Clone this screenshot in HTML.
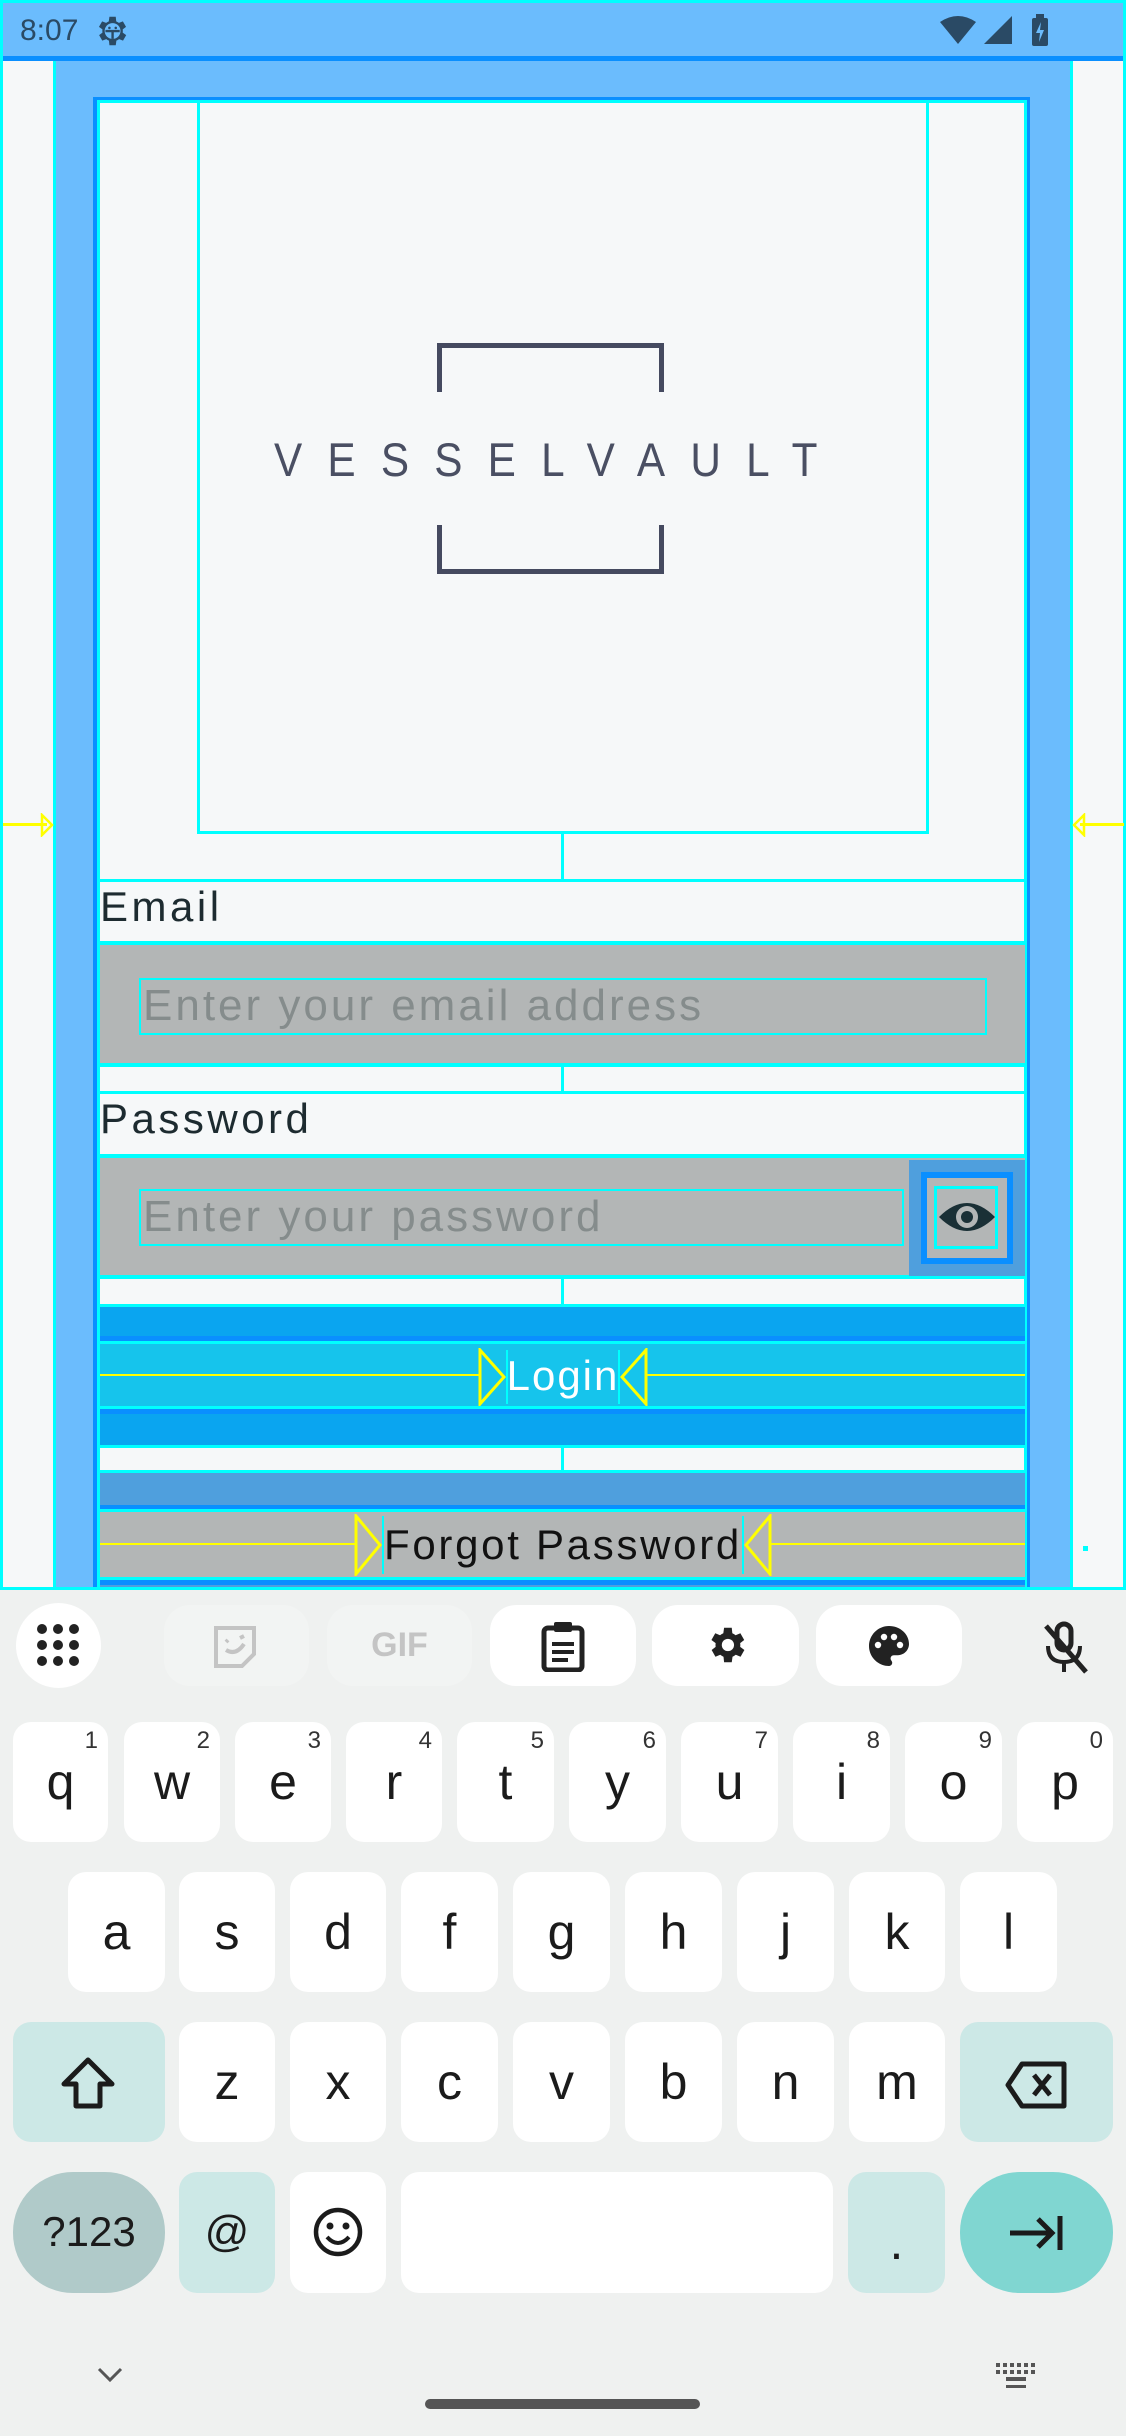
<!DOCTYPE html>
<html><head><meta charset="utf-8"><style>
*{margin:0;padding:0;box-sizing:border-box}
body{width:1126px;height:2436px;position:relative;overflow:hidden;background:#eff1f0;font-family:"Liberation Sans",sans-serif}
.a{position:absolute}
.key{position:absolute;background:#fff;border-radius:18px;color:#1b1b1b;font-size:50px;text-align:center;line-height:120px}
.key sup{position:absolute;right:10px;top:4px;font-size:24px;line-height:30px;color:#333}
.tb{position:absolute;top:1605px;height:81px;border-radius:26px;background:#fff}
.lbl{font-size:42px;letter-spacing:3.5px;color:#1d2b30}
.ph{font-size:44px;letter-spacing:3px;color:#858c8c;line-height:52px;padding-left:2px;white-space:nowrap;overflow:hidden}
</style></head><body>
<div class="a" style="left:0;top:0;width:1126px;height:1590px;background:#f6f8f9;border:3px solid #00ffff"></div>
<div class="a" style="left:0;top:0;width:1126px;height:61px;background:#6bbcfd;border:3px solid #00ffff;border-bottom:none"></div>
<div class="a" style="left:3px;top:56px;width:1120px;height:5px;background:#0a8fff"></div>
<div class="a" style="left:20px;top:14px;font-size:30px;color:#2a4a65">8:07</div>
<svg class="a" style="left:92px;top:12px" width="38" height="38" viewBox="0 0 24 24"><path fill="#2a4a65" d="M19.4 13a7.5 7.5 0 0 0 0-2l2.1-1.6-2-3.5-2.5 1a7 7 0 0 0-1.7-1L15 3h-4l-.4 2.9a7 7 0 0 0-1.7 1l-2.5-1-2 3.5L6.6 11a7.5 7.5 0 0 0 0 2l-2.1 1.6 2 3.5 2.5-1a7 7 0 0 0 1.7 1L11 21h4l.4-2.9a7 7 0 0 0 1.7-1l2.5 1 2-3.5z"/><circle cx="13" cy="12" r="5" fill="#6bbcfd"/><path d="M8.5 12h9M13 12v5" stroke="#2a4a65" stroke-width="1.5"/><circle cx="11" cy="10" r=".8" fill="#2a4a65"/><circle cx="15" cy="10" r=".8" fill="#2a4a65"/></svg>
<svg class="a" style="left:940px;top:14px" width="120" height="34" viewBox="0 0 120 34"><path d="M0 8 Q18 -4 36 8 L18 30Z" fill="#2a4a65"/><path d="M44 30 L72 2 L72 30Z" fill="#2a4a65"/><rect x="92" y="4" width="16" height="28" rx="2" fill="#2a4a65"/><rect x="96" y="0" width="8" height="5" fill="#2a4a65"/><path d="M101 8 L96 19 L100 19 L99 28 L104 16 L100 16Z" fill="#6bbcfd"/></svg>
<div class="a" style="left:53px;top:61px;width:1020px;height:1529px;background:#6bbcfd;border-left:3px solid #00ffff;border-right:3px solid #00ffff"></div>
<div class="a" style="left:93px;top:97px;width:937px;height:1493px;background:#0a8fff"></div>
<div class="a" style="left:97px;top:100px;width:930px;height:1490px;background:#f6f8f9;border:3px solid #00ffff"></div>
<div class="a" style="left:3px;top:823px;width:44px;height:3px;background:#ffff00"></div>
<svg class="a" style="left:40px;top:813px" width="14" height="24"><path d="M2 2 L12 12 L2 22Z" fill="none" stroke="#ffff00" stroke-width="2.5"/></svg>
<div class="a" style="left:1080px;top:823px;width:44px;height:3px;background:#ffff00"></div>
<svg class="a" style="left:1072px;top:813px" width="14" height="24"><path d="M12 2 L2 12 L12 22Z" fill="none" stroke="#ffff00" stroke-width="2.5"/></svg>
<div class="a" style="left:197px;top:100px;width:732px;height:734px;border:3px solid #00ffff;border-top:none"></div>
<div class="a" style="left:437px;top:343px;width:227px;height:49px;border:5px solid #454a60;border-bottom:none"></div>
<div class="a" style="left:437px;top:525px;width:227px;height:49px;border:5px solid #454a60;border-top:none"></div>
<div class="a" style="left:274px;top:432px;font-size:47px;color:#4a4f63;letter-spacing:28px;white-space:nowrap;transform:scaleX(.9);transform-origin:left">VESSELVAULT</div>
<div class="a" style="left:561px;top:832px;width:3px;height:50px;background:#00ffff"></div>
<div class="a" style="left:100px;top:879px;width:925px;height:3px;background:#00ffff"></div>
<div class="a lbl" style="left:100px;top:883px">Email</div>
<div class="a" style="left:100px;top:941px;width:925px;height:126px;background:#b3b6b6;border-top:4px solid #00ffff;border-bottom:4px solid #00ffff"></div>
<div class="a ph" style="left:139px;top:978px;width:848px;height:57px;border:2px solid #00ffff">Enter your email address</div>
<div class="a" style="left:561px;top:1067px;width:3px;height:26px;background:#00ffff"></div>
<div class="a" style="left:100px;top:1091px;width:925px;height:3px;background:#00ffff"></div>
<div class="a lbl" style="left:100px;top:1095px">Password</div>
<div class="a" style="left:100px;top:1154px;width:925px;height:125px;background:#b3b6b6;border-top:4px solid #00ffff;border-bottom:4px solid #00ffff"></div>
<div class="a ph" style="left:139px;top:1189px;width:765px;height:57px;border:2px solid #00ffff">Enter your password</div>
<div class="a" style="left:909px;top:1160px;width:116px;height:116px;background:#4f9fdd"></div>
<div class="a" style="left:921px;top:1172px;width:92px;height:92px;border:6px solid #0a8fff;background:#b3b6b6"></div>
<div class="a" style="left:934px;top:1186px;width:64px;height:63px;border:3px solid #00ffff"></div>
<svg class="a" style="left:937px;top:1197px" width="60" height="40" viewBox="0 0 60 40"><path d="M2 20 Q30 -8 58 20 Q30 48 2 20Z" fill="#1a3036"/><circle cx="30" cy="20" r="11" fill="#b3b6b6"/><circle cx="30" cy="20" r="6" fill="#1a3036"/></svg>
<div class="a" style="left:561px;top:1279px;width:3px;height:27px;background:#00ffff"></div>
<div class="a" style="left:100px;top:1304px;width:925px;height:144px;background:#0aa5f0;border-top:3px solid #00ffff;border-bottom:3px solid #00ffff"></div>
<div class="a" style="left:100px;top:1341px;width:925px;height:68px;background:#16c4ec;border-top:3px solid #00ffff;border-bottom:3px solid #00ffff;box-shadow:0 -5px 0 #0a8fff,0 5px 0 #0a8fff"></div>
<div class="a" style="left:100px;top:1374px;width:380px;height:2px;background:#ffff00"></div>
<div class="a" style="left:646px;top:1374px;width:379px;height:2px;background:#ffff00"></div>
<svg class="a" style="left:478px;top:1348px" width="170" height="58"><path d="M2 2 L26 29 L2 56Z M168 2 L144 29 L168 56Z" fill="none" stroke="#ffff00" stroke-width="3"/><path d="M29 2V56M141 2V56" stroke="#00ffff" stroke-width="2"/></svg>
<div class="a" style="left:480px;top:1350px;width:166px;text-align:center;font-size:42px;letter-spacing:2px;color:#fff;line-height:52px">Login</div>
<div class="a" style="left:561px;top:1448px;width:3px;height:24px;background:#00ffff"></div>
<div class="a" style="left:100px;top:1470px;width:925px;height:120px;background:#4f9fdd;border-top:3px solid #00ffff"></div>
<div class="a" style="left:100px;top:1509px;width:925px;height:71px;background:#b3b6b6;border-top:3px solid #00ffff;border-bottom:3px solid #00ffff;box-shadow:0 -4px 0 #0a8fff,0 5px 0 #0a8fff"></div>
<div class="a" style="left:100px;top:1543px;width:256px;height:2px;background:#ffff00"></div>
<div class="a" style="left:770px;top:1543px;width:255px;height:2px;background:#ffff00"></div>
<svg class="a" style="left:354px;top:1514px" width="418" height="62"><path d="M2 2 L26 31 L2 60Z M416 2 L392 31 L416 60Z" fill="none" stroke="#ffff00" stroke-width="3"/><path d="M29 2V60M389 2V60" stroke="#00ffff" stroke-width="2"/></svg>
<div class="a" style="left:354px;top:1517px;width:418px;text-align:center;font-size:42px;letter-spacing:2.7px;color:#111;line-height:56px;white-space:nowrap">Forgot Password</div>
<div class="a" style="left:1083px;top:1546px;width:5px;height:5px;background:#00ffff"></div>
<div class="a" style="left:0;top:1587px;width:1126px;height:3px;background:#00ffff"></div>
<div class="a" style="left:16px;top:1603px;width:85px;height:85px;border-radius:50%;background:#fff"></div>
<svg class="a" style="left:36px;top:1623px" width="44" height="44"><g fill="#222"><circle cx="6" cy="6" r="5"/><circle cx="22" cy="6" r="5"/><circle cx="38" cy="6" r="5"/><circle cx="6" cy="22" r="5"/><circle cx="22" cy="22" r="5"/><circle cx="38" cy="22" r="5"/><circle cx="6" cy="38" r="5"/><circle cx="22" cy="38" r="5"/><circle cx="38" cy="38" r="5"/></g></svg>
<div class="tb" style="left:164px;width:145px;background:#f2f4f3"></div>
<svg class="a" style="left:212px;top:1624px" width="46" height="46" viewBox="0 0 46 46"><path d="M4 4h38v26L30 42H4Z" fill="none" stroke="#c4c4c4" stroke-width="4"/><path d="M14 18 L16 16 M28 14l4-2M14 26q10 6 18-6" stroke="#c4c4c4" stroke-width="4" fill="none"/></svg>
<div class="tb" style="left:327px;width:145px;background:#f2f4f3"></div>
<div class="a" style="left:327px;top:1626px;width:145px;text-align:center;font-size:34px;font-weight:bold;color:#c4c4c4">GIF</div>
<div class="tb" style="left:490px;width:146px"></div>
<svg class="a" style="left:540px;top:1620px" width="46" height="52" viewBox="0 0 46 52"><rect x="4" y="8" width="38" height="42" rx="4" fill="none" stroke="#222" stroke-width="5"/><rect x="14" y="2" width="18" height="10" rx="2" fill="#222"/><path d="M12 24h22M12 32h22M12 40h16" stroke="#222" stroke-width="4"/></svg>
<div class="tb" style="left:652px;width:147px"></div>
<svg class="a" style="left:703px;top:1622px" width="46" height="46" viewBox="0 0 24 24"><path fill="#222" d="M19.4 13a7.5 7.5 0 0 0 0-2l2.1-1.6-2-3.5-2.5 1a7 7 0 0 0-1.7-1L15 3h-4l-.4 2.9a7 7 0 0 0-1.7 1l-2.5-1-2 3.5L6.6 11a7.5 7.5 0 0 0 0 2l-2.1 1.6 2 3.5 2.5-1a7 7 0 0 0 1.7 1L11 21h4l.4-2.9a7 7 0 0 0 1.7-1l2.5 1 2-3.5z"/><circle cx="13" cy="12" r="3.2" fill="#fff"/></svg>
<div class="tb" style="left:816px;width:146px"></div>
<svg class="a" style="left:865px;top:1622px" width="48" height="48" viewBox="0 0 24 24"><path fill="#222" d="M12 2C6.5 2 2 6.5 2 12s4.5 10 10 10c1 0 1.6-.8 1.6-1.6 0-.5-.2-.8-.4-1.1-.3-.3-.4-.7-.4-1.1 0-.9.7-1.6 1.6-1.6h2c3 0 5.6-2.5 5.6-5.6C22 6 17.5 2 12 2z"/><circle cx="6.5" cy="11.5" r="1.6" fill="#fff"/><circle cx="9.5" cy="7.5" r="1.6" fill="#fff"/><circle cx="14.5" cy="7.5" r="1.6" fill="#fff"/><circle cx="17.5" cy="11.5" r="1.6" fill="#fff"/></svg>
<svg class="a" style="left:1040px;top:1620px" width="50" height="56" viewBox="0 0 50 56"><rect x="17" y="4" width="14" height="26" rx="7" fill="none" stroke="#222" stroke-width="5"/><path d="M8 26q0 16 16 16t16-16M24 42v10" fill="none" stroke="#222" stroke-width="4"/><path d="M6 6L46 52" stroke="#222" stroke-width="5"/></svg>
<div class="key" style="left:13px;top:1722px;width:95px;height:120px">q<sup>1</sup></div>
<div class="key" style="left:124px;top:1722px;width:96px;height:120px">w<sup>2</sup></div>
<div class="key" style="left:235px;top:1722px;width:96px;height:120px">e<sup>3</sup></div>
<div class="key" style="left:346px;top:1722px;width:96px;height:120px">r<sup>4</sup></div>
<div class="key" style="left:457px;top:1722px;width:97px;height:120px">t<sup>5</sup></div>
<div class="key" style="left:569px;top:1722px;width:97px;height:120px">y<sup>6</sup></div>
<div class="key" style="left:681px;top:1722px;width:97px;height:120px">u<sup>7</sup></div>
<div class="key" style="left:793px;top:1722px;width:97px;height:120px">i<sup>8</sup></div>
<div class="key" style="left:905px;top:1722px;width:97px;height:120px">o<sup>9</sup></div>
<div class="key" style="left:1017px;top:1722px;width:96px;height:120px">p<sup>0</sup></div>
<div class="key" style="left:68px;top:1872px;width:97px;height:120px">a</div>
<div class="key" style="left:179px;top:1872px;width:96px;height:120px">s</div>
<div class="key" style="left:290px;top:1872px;width:96px;height:120px">d</div>
<div class="key" style="left:401px;top:1872px;width:97px;height:120px">f</div>
<div class="key" style="left:513px;top:1872px;width:97px;height:120px">g</div>
<div class="key" style="left:625px;top:1872px;width:97px;height:120px">h</div>
<div class="key" style="left:737px;top:1872px;width:97px;height:120px">j</div>
<div class="key" style="left:849px;top:1872px;width:96px;height:120px">k</div>
<div class="key" style="left:960px;top:1872px;width:97px;height:120px">l</div>
<div class="key" style="left:13px;top:2022px;width:152px;height:120px;background:#cce8e6"></div>
<svg class="a" style="left:60px;top:2056px" width="56" height="54" viewBox="0 0 56 54"><path d="M28 4 L52 28 H40 V50 H16 V28 H4Z" fill="none" stroke="#1b1b1b" stroke-width="5" stroke-linejoin="round"/></svg>
<div class="key" style="left:179px;top:2022px;width:96px;height:120px">z</div>
<div class="key" style="left:290px;top:2022px;width:96px;height:120px">x</div>
<div class="key" style="left:401px;top:2022px;width:97px;height:120px">c</div>
<div class="key" style="left:513px;top:2022px;width:97px;height:120px">v</div>
<div class="key" style="left:625px;top:2022px;width:97px;height:120px">b</div>
<div class="key" style="left:737px;top:2022px;width:97px;height:120px">n</div>
<div class="key" style="left:849px;top:2022px;width:96px;height:120px">m</div>
<div class="key" style="left:960px;top:2022px;width:153px;height:120px;background:#cce8e6"></div>
<svg class="a" style="left:1004px;top:2060px" width="66" height="50" viewBox="0 0 66 50"><path d="M18 4 H60 V46 H18 L4 25Z" fill="none" stroke="#1b1b1b" stroke-width="5" stroke-linejoin="round"/><path d="M30 15 L46 35 M46 15 L30 35" stroke="#1b1b1b" stroke-width="5"/></svg>
<div class="key" style="left:13px;top:2172px;width:152px;height:121px;background:#b0cac9;border-radius:60px;font-size:42px">?123</div>
<div class="key" style="left:179px;top:2172px;width:96px;height:121px;background:#cce8e6;font-size:44px">@</div>
<div class="key" style="left:290px;top:2172px;width:96px;height:121px"></div>
<svg class="a" style="left:312px;top:2206px" width="52" height="52" viewBox="0 0 52 52"><circle cx="26" cy="26" r="22" fill="none" stroke="#1b1b1b" stroke-width="4.5"/><circle cx="18" cy="20" r="3.5" fill="#1b1b1b"/><circle cx="34" cy="20" r="3.5" fill="#1b1b1b"/><path d="M15 31 q11 12 22 0" fill="none" stroke="#1b1b1b" stroke-width="4"/></svg>
<div class="key" style="left:401px;top:2172px;width:432px;height:121px"></div>
<div class="key" style="left:848px;top:2172px;width:97px;height:121px;background:#cce8e6;line-height:140px">.</div>
<div class="key" style="left:960px;top:2172px;width:153px;height:121px;background:#80d6d1;border-radius:60px"></div>
<svg class="a" style="left:1008px;top:2212px" width="56" height="42" viewBox="0 0 56 42"><path d="M2 21H44M30 7L44 21L30 35M52 4V38" fill="none" stroke="#1b1b1b" stroke-width="5"/></svg>
<svg class="a" style="left:96px;top:2366px" width="28" height="18"><path d="M3 3L14 14L25 3" fill="none" stroke="#555" stroke-width="3"/></svg>
<svg class="a" style="left:996px;top:2363px" width="42" height="26"><g fill="#555"><rect x="0" y="0" width="4" height="4"/><rect x="7" y="0" width="4" height="4"/><rect x="14" y="0" width="4" height="4"/><rect x="21" y="0" width="4" height="4"/><rect x="28" y="0" width="4" height="4"/><rect x="35" y="0" width="4" height="4"/><rect x="0" y="7" width="4" height="4"/><rect x="7" y="7" width="4" height="4"/><rect x="14" y="7" width="4" height="4"/><rect x="21" y="7" width="4" height="4"/><rect x="28" y="7" width="4" height="4"/><rect x="35" y="7" width="4" height="4"/><rect x="10" y="14" width="20" height="4"/><rect x="10" y="22" width="20" height="3"/></g></svg>
<div class="a" style="left:425px;top:2399px;width:275px;height:10px;border-radius:5px;background:#555"></div>
</body></html>
